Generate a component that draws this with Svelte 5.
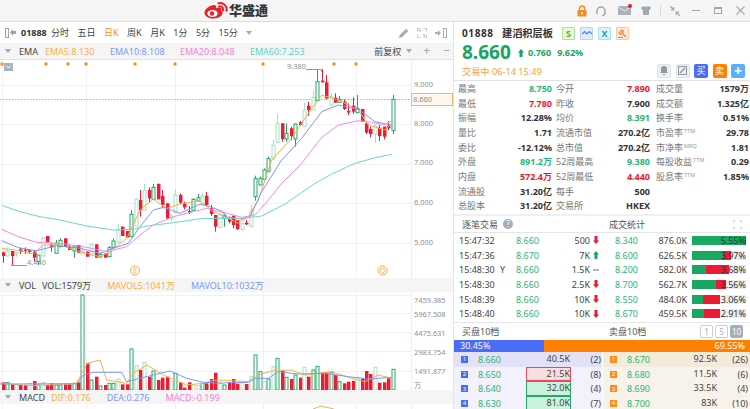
<script>
  const cx = (i) => Math.round(2.7 + i * 4.43) + 0.5;
  const y6 = (v) => 130 + v / 3;
  const y7 = (v) => 60 + v / 3;
  const left = [
    ['r',367,378,365,398],['l',363,378,352,378],['r',363,378,363,405],['l',368,372,365,380],['r',358,364,352,372],
    ['r',358,361,352,372],['r',361,364,361,372],['r',365,383,360,395],['g',375,395,375,405],['l',323,378,323,378],
    ['r',318,337,318,337],['r',344,352,338,365],['g',340,370,330,370],['g',331,350,325,352],['r',325,350,325,350],
    ['r',350,360,345,360],['g',348,363,348,383],['r',345,368,345,368],['l',364,372,352,372],['r',365,380,365,380],
    ['l',343,375,340,375],['r',343,383,343,383],['g',373,380,368,385],['r',370,383,370,383],['g',353,380,348,380],
    ['g',333,352,325,355],['l',300,337,283,337],['r',290,318,290,318],['r',303,322,303,322],['g',253,320,240,320],
    ['l',207,288,205,288],['r',210,240,180,260],['l',182,240,162,240],['r',180,205,172,218],['g',172,208,162,208],
    ['r',162,208,160,208],['r',198,225,180,235],['r',220,265,220,268],['l',258,265,252,275],['l',195,248,178,250],
    ['r',195,218,190,222],['r',220,232,215,238],['r',243,246,228,252],['g',208,241,205,242],['g',203,213,192,215],
    ['l',198,222,188,222],['r',197,225,186,228],['r',235,252,225,258],['r',255,290,255,305],['l',253,292,250,292],
    ['g',256,265,250,290]
  ].map((c) => [c[0], y6(c[1]), y6(c[2]), y6(c[3]), y6(c[4])]);
  const right = [
    ['r',477,485,470,490],['r',468,495,465,505],['r',481,507,481,510],['l',490,508,488,512],['r',488,493,480,495],
    ['l',452,500,435,500],['g',355,410,347,422],['g',355,375,350,375],['g',330,358,325,358],['g',296,335,290,335],
    ['l',256,295,240,300],['l',190,247,162,250],['r',190,237,190,245],['g',220,237,190,245],['r',205,228,200,240],
    ['g',192,237,190,260],['r',186,195,183,198],['l',150,200,128,200],['r',137,150,125,167],['l',112,150,90,150],
    ['g',65,122,30,122],['r',62,67,28,67],['r',67,115,45,118],['l',110,135,98,138],['r',113,128,100,128],
    ['g',118,127,108,127],['r',125,147,118,150],['r',153,155,130,165],['r',137,155,112,162],['g',145,158,105,158],
    ['r',147,185,147,185],['r',190,218,186,222],['r',207,222,200,232],['l',197,222,195,248],['r',203,228,195,243],
    ['r',200,230,200,238],['r',197,205,183,210],['g',118,212,105,222]
  ].map((c) => [c[0], y7(c[1]), y7(c[2]), y7(c[3]), y7(c[4])]);
  const candles = [...left, ...right].map((c, i) => ({ t: c[0], top: c[1], bot: c[2], hi: c[3], lo: c[4], x: cx(i) }));

  const line = (a, b, ya, yb) =>
    [...a.map((p) => `${(p[0] / 3).toFixed(1)},${ya(p[1]).toFixed(1)}`), ...b.map((p) => `${(225 + p[0] / 3).toFixed(1)},${yb(p[1]).toFixed(1)}`)].join(' ');
  const emas = [
    { c: '#f8b04a', p: line([[5,355],[60,362],[100,372],[130,345],[180,345],[240,365],[300,380],[330,365],[380,325],[420,240],[460,208],[500,235],[540,222],[600,212],[640,245],[670,258]], [[0,470],[40,490],[70,470],[100,420],[140,300],[200,235],[250,160],[290,105],[340,120],[400,150],[430,195],[480,210],[500,190]], y6, y7) },
    { c: '#7a98fb', p: line([[5,332],[60,355],[110,362],[170,347],[240,355],[300,370],[340,355],[385,340],[420,290],[460,240],[490,232],[540,250],[600,222],[630,230],[670,245]], [[0,470],[50,478],[75,470],[110,395],[170,300],[230,235],[290,155],[340,135],[400,148],[450,185],[500,195]], y6, y7) },
    { c: '#f98bdc', p: line([[5,298],[60,322],[110,337],[180,340],[260,352],[320,365],[380,350],[420,315],[460,285],[520,260],[580,245],[620,235],[670,248]], [[0,458],[50,472],[90,465],[130,420],[170,370],[230,310],[290,232],[340,195],[400,182],[440,187],[480,195],[500,182]], y6, y7) },
    { c: '#6dd6d1', p: line([[5,226],[60,245],[120,260],[180,270],[260,288],[340,300],[400,298],[440,288],[520,278],[600,266],[670,265]], [[0,475],[50,475],[110,468],[180,432],[270,370],[320,342],[390,310],[450,293],[500,283]], y6, y7) }
  ];
  const dots = [2, 46, 68, 86, 135, 175, 263, 334, 356];
  const vgrid = [2.5, 86.5, 175.5, 263.5, 356.5];
  const axis = [['9.000', 86.7], ['8.000', 125.7], ['7.000', 165], ['6.000', 204.7], ['5.000', 244.5]];

  const yv = (v) => 275 + v / 3;
  const volTops = [
    ['r',322],['g',323],['r',328],['l',330],['r',330],['r',330],['l',325],['r',318],['g',330],['l',322],['r',330],['r',325],['g',330],['g',330],['r',328],['r',328],['g',325],['r',322],
    ['g',60],['r',265],['g',315],['r',305],['g',333],['r',330],['g',325],['g',325],['l',312],['r',328],['r',328],['g',222],['l',272],['r',285],['l',262],['r',305],['g',288],['r',315],['r',308],['r',305],['l',320],['g',295],['r',322],['r',338],['r',322],['l',330],['l',332],['g',325],['r',325],['r',312],['r',293],['l',322],['g',330],
    ['r',322],['r',312],['r',326],['l',322],['r',327],['l',305],['g',240],['g',290],['l',320],['g',312],['l',275],['g',250],['r',285],['g',307],['r',312],['g',300],['r',308],['l',277],['r',305],['g',285],['g',274],['r',293],['r',292],['g',292],['r',300],['g',320],['r',325],['r',320],['r',318],['l',307],['r',310],['r',288],['r',297],['l',277],['r',323],['r',322],['r',310],['g',283]
  ];
  const vols = volTops.map((v, i) => ({ t: v[0], top: yv(v[1]), x: cx(i) }));
  const mavol5 = line([[0,325],[100,332],[230,325],[245,295],[262,265],[300,255],[320,315],[380,325],[400,295],[440,270],[500,305],[560,330],[610,325],[640,316],[670,316]], [[0,316],[70,320],[100,300],[140,288],[200,285],[240,300],[320,290],[380,310],[420,320],[460,300],[500,310]], yv, yv);
  const mavol10 = line([[0,327],[230,326],[250,300],[280,292],[365,292],[380,320],[420,310],[480,295],[510,288],[560,310],[610,322],[670,325]], [[0,323],[70,322],[90,310],[130,310],[160,290],[220,297],[300,295],[370,305],[430,312],[500,307]], yv, yv);
  const volGrid = [295, 313, 332, 351, 371];
  const volAxis = [['7459.385', 303.4], ['5967.508', 316.7], ['4475.631', 335.7], ['2983.754', 355], ['1491.877', 374.4], ['万', 388]];

  const tabs = [['分时'], ['五日'], ['日K', true], ['周K'], ['月K'], ['1分'], ['5分'], ['15分']];
  const stats = [
    ['最高','8.750','g','今开','7.890','r','成交量','1579万',''],
    ['最低','7.780','r','昨收','7.900','','成交额','1.325亿',''],
    ['振幅','12.28%','','均价','8.391','g','换手率','0.51%',''],
    ['量比','1.71','','流通市值','270.2亿','','市盈率','29.78','','TTM'],
    ['委比','-12.12%','','总市值','270.2亿','','市净率','1.81','','MRQ'],
    ['外盘','891.2万','g','52周最高','9.380','g','每股收益','0.29','','TTM'],
    ['内盘','572.4万','r','52周最低','4.440','r','股息率','1.85%','','TTM'],
    ['流通股','31.20亿','','每手','500','','','',''],
    ['总股本','31.20亿','','交易所','HKEX','','','','']
  ];
  const trades = [
    ['15:47:32','','8.660','500','d','8.340','876.0K',53,1.3,'5.55%'],
    ['15:47:36','','8.670','7K','u','8.600','626.5K',31,7.7,'3.97%'],
    ['15:48:30','Y','8.660','1.5K','n','8.200','582.0K',14.3,22.4,'3.68%'],
    ['15:48:30','','8.660','2.5K','d','8.700','562.7K',24.4,10,'3.56%'],
    ['15:48:39','','8.660','10K','d','8.550','484.0K',11,16.7,'3.06%'],
    ['15:48:40','','8.660','10K','d','8.670','459.5K',12,16.4,'2.91%']
  ];
  const buys = [
    [1,'8.660','40.5K','(2)',''],
    [2,'8.650','21.5K','(8)','pink'],
    [3,'8.640','32.0K','(4)','mint'],
    [4,'8.630','81.0K','(7)','mint']
  ];
  const sells = [
    [1,'8.670','92.5K','(26)'],
    [2,'8.680','11.5K','(6)'],
    [3,'8.690','33.5K','(4)'],
    [4,'8.700','83K','(10)']
  ];
</script>

<div class="app">
  <header class="top">
    <div class="logo">
      <svg width="24" height="17" viewBox="0 0 24 17">
        <path d="M0.500 11C0.500 7 6 3 10 3c2 0 2.600 1.400 2 3.200 3-1.200 5.500-.7 5.500 1.500 0 .6-.2 1-.4 1.400 1.200.4 1.500 1.200 1.500 2 0 2.800-4.600 5.400-9 5.400S0.500 14.500 0.500 11z" fill="#e8202c"/>
        <ellipse cx="8.500" cy="11.500" rx="5.200" ry="3.500" fill="#fff"/>
        <circle cx="8" cy="11.500" r="2.200" fill="#e8202c"/>
        <path d="M14.500 1.200c5-1 9 3 8 7.600M15 4.400c2.500-.5 4.500 1.500 4 4" fill="none" stroke="#e8202c" stroke-width="2" stroke-linecap="round"/>
      </svg>
      <span>华盛通</span>
    </div>
    <div class="winicons">
      <svg width="10" height="12" viewBox="0 0 10 12"><path d="M2.500 5V3.500a2.500 2.500 0 0 1 5 0V5" fill="none" stroke="#f58a1f" stroke-width="1.500"/><rect x="0.500" y="5" width="9" height="6.500" rx="1" fill="#f58a1f"/><rect x="4.300" y="7" width="1.400" height="2.500" fill="#fff"/></svg>
      <svg width="12" height="12" viewBox="0 0 12 12"><path d="M2 9V6a4 4 0 0 1 8 0v3M10 9l-2.500 2" fill="none" stroke="#9aa3ad" stroke-width="1.500"/></svg>
      <span class="mail"><svg width="13" height="9" viewBox="0 0 13 9"><rect width="13" height="9" rx="1" fill="#a9b1ba"/><path d="M0.500 1l6 4 6-4" fill="none" stroke="#fff" stroke-width="0.800"/></svg><i></i></span>
      <svg width="10" height="9" viewBox="0 0 10 9"><path d="M3 0L0 1.500 1 4l1-.3V9h6V3.700L9 4l1-2.500L7 0 5 1z" fill="#a0a8b1"/></svg>
      <span class="vsep"></span>
      <svg width="10" height="10" viewBox="0 0 10 10"><path d="M0 0l3.500 3.500M3.800 1v2.800H1M10 10L6.500 6.500M6.200 9V6.200H9" fill="none" stroke="#a0a8b1" stroke-width="1.200"/></svg>
      <span class="minus"></span>
      <span class="maxi"></span>
      <svg width="9" height="9" viewBox="0 0 9 9"><path d="M.5.5l8 8M8.500.5l-8 8" stroke="#a0a8b1" stroke-width="1.100"/></svg>
    </div>
  </header>

  <div class="body">
    <section class="chartcol">
      <div class="toolbar">
        <span class="sidetoggle"><i></i><svg width="6" height="7" viewBox="0 0 6 7"><path d="M0 3.500L3 0v2h3v3H3v2z" fill="#9aa3ad"/></svg></span>
        <b class="code">01888</b>
        <div class="tabs">
          {#each tabs as t}<span class:on={t[1]}>{t[0]}</span>{/each}
          <i class="caret"></i>
        </div>
        <div class="tools">
          <svg width="10" height="10" viewBox="0 0 10 10"><path d="M0 10l.7-3L7 .7 9.300 3 3 9.300z" fill="#a6adb5"/></svg>
          <svg width="10" height="10" viewBox="0 0 10 10"><path d="M0 3.500V0h3.500M6.500 0H10v3.500M10 6.500V10H6.500M3.500 10H0V6.500M2 2l1.500 1.500M8 8L6.500 6.500" fill="none" stroke="#a6adb5" stroke-width="1.200"/></svg>
          <svg width="12" height="10" viewBox="0 0 12 10"><path d="M0 4h3V2l3 3-3 3V6H0z" fill="#a6adb5"/><rect x="8.500" y=".5" width="3" height="9" fill="none" stroke="#a6adb5"/></svg>
        </div>
      </div>

      <div class="legend ema">
        <i class="caret"></i><span class="name">EMA</span>
        <span class="c1 w65">EMA5:8.130</span><span class="c2 w70">EMA10:8.108</span><span class="c3 w70">EMA20:8.048</span><span class="c4">EMA60:7.253</span>
        <div class="adj"><span>前复权</span><i class="caret"></i><em>+</em><em>−</em></div>
      </div>

      <div class="plot price">
        <svg width="453" height="218" viewBox="0 60 453 218">
          {#each [85.5, 124.5, 164.5, 203.5, 243.5] as y}<line x1="0" x2="411" y1={y} y2={y} stroke="#f1f1f1"/>{/each}
          {#each vgrid as x}<line x1={x} x2={x} y1="59" y2="278" stroke="#f1f1f1"/>{/each}
          <line x1="411.5" x2="411.5" y1="59" y2="278" stroke="#eeeeee"/>
          <line x1="0" x2="411" y1="99.5" y2="99.5" stroke="#f6a33c" stroke-dasharray="1.5 1.5"/>
          {#each dots as x}<circle cx={x} cy="64" r="1.7" fill="#ff8a1f"/>{/each}
          {#each candles as c}
            <line x1={c.x} x2={c.x} y1={c.hi} y2={c.lo} stroke={c.t === 'r' ? '#ec1c34' : c.t === 'g' ? '#22a968' : '#a8e0c3'}/>
            {#if c.t === 'r'}
              <rect x={c.x - 1.5} y={c.top} width="3.5" height={Math.max(c.bot - c.top, 1.5)} fill="#ec1c34"/>
            {:else}
              <rect x={c.x - 1.5} y={c.top} width="3" height={c.bot - c.top} fill="#fff" stroke={c.t === 'g' ? '#22a968' : '#a8e0c3'}/>
            {/if}
          {/each}
          {#each emas as m}<polyline points={m.p} fill="none" stroke={m.c}/>{/each}
          <polyline points="306,69.5 321.5,69.5 321.5,72" fill="none" stroke="#999"/>
          <text x="287" y="69" class="tiny">9.380</text>
          <line x1="11" x2="27" y1="265.5" y2="265.5" stroke="#999"/>
          <text x="27" y="265" class="tiny">4.440</text>
          {#each axis as a}<text x="414" y={a[1]} class="ax">{a[0]}</text>{/each}
          <rect x="411.5" y="93.5" width="41" height="12" fill="#fff6ec" stroke="#f8b565"/>
          <text x="413" y="102.2" class="ax">8.660</text>
          <circle cx="135" cy="270.5" r="4.5" fill="#fff" stroke="#f9a650"/>
          <text x="135" y="273" class="mark">E</text>
          <circle cx="382.5" cy="270.5" r="4.5" fill="#fff" stroke="#f9a650"/>
          <text x="382.5" y="273" class="mark">Q</text>
          <rect x="4" y="63" width="9" height="8" fill="#aab2bd"/>
          <path d="M6 65.5l2.5 2.500 2.500-2.500" fill="none" stroke="#fff"/>
        </svg>
      </div>

      <div class="legend vol">
        <i class="caret"></i><span class="name">VOL</span><span class="dark gap">VOL:1579万</span><span class="c1 gap2">MAVOL5:1041万</span><span class="c2 gap2">MAVOL10:1032万</span>
      </div>

      <div class="plot volume">
        <svg width="453" height="98" viewBox="0 292 453 98">
          {#each volGrid as y}<line x1="0" x2="411" y1={y + .5} y2={y + .5} stroke="#f1f1f1"/>{/each}
          {#each vgrid as x}<line x1={x} x2={x} y1="292" y2="390" stroke="#f1f1f1"/>{/each}
          <line x1="411.5" x2="411.5" y1="292" y2="390" stroke="#eeeeee"/>
          {#each vols as v}
            {#if v.t === 'r'}
              <rect x={v.x - 1.5} y={v.top} width="3.5" height={390 - v.top} fill="#ec1c34"/>
            {:else}
              <rect x={v.x - 1.5} y={v.top} width="3" height={390 - v.top} fill="#fff" stroke={v.t === 'g' ? '#22a968' : '#a8e0c3'}/>
            {/if}
          {/each}
          <polyline points={mavol5} fill="none" stroke="#f8b04a"/>
          <polyline points={mavol10} fill="none" stroke="#7a98fb"/>
          {#each volAxis as a}<text x="414" y={a[1]} class="ax">{a[0]}</text>{/each}
        </svg>
      </div>

      <div class="legend macd">
        <i class="caret"></i><span class="name">MACD</span><span class="c1 gap">DIF:0.176</span><span class="c2 gap2">DEA:0.276</span><span class="c3 gap2">MACD:-0.199</span>
      </div>
      <div class="plot rest">
        <svg width="453" height="5" viewBox="0 404 453 5">
          {#each vgrid as x}<line x1={x} x2={x} y1="404" y2="409" stroke="#f1f1f1"/>{/each}
          <line x1="411.5" x2="411.5" y1="404" y2="409" stroke="#eeeeee"/>
          <polyline points="313,409 321,406 334,409" fill="none" stroke="#f8b04a"/>
        </svg>
      </div>
    </section>

    <aside class="side">
      <div class="quote">
        <div class="q1">
          <b class="qcode">01888</b><b class="qname">建滔积层板</b>
          <div class="badges">
            <span class="bd s">S</span>
            <span class="bd w"><svg width="10" height="6" viewBox="0 0 10 6"><path d="M0 4l2.500-2.500L5 4l2.500-2.500L10 4" fill="none" stroke="#3f86d8" stroke-width="1.200"/></svg></span>
            <span class="bd x">X</span>
            <span class="bd h"><svg width="9" height="9" viewBox="0 0 9 9"><path d="M1 4l3-3 1.500 1.500-3 3zM0 8.500h5M4 4l4 4" fill="none" stroke="#f2813a" stroke-width="1.200"/></svg></span>
          </div>
        </div>
        <div class="q2">
          <b class="big">8.660</b>
          <svg class="up" width="6" height="8" viewBox="0 0 6 8"><path d="M3 0l3 3.500H4.500V8h-3V3.500H0z" fill="#17a660"/></svg>
          <b class="chg">0.760</b><b class="chg pct">9.62%</b>
        </div>
        <div class="q3">
          <span class="trading">交易中 06-14 15:49</span>
          <div class="btns">
            <span class="btn gray"><svg width="8" height="9" viewBox="0 0 8 9"><path d="M4 0a3 3 0 0 1 3 3v3l1 1H0l1-1V3a3 3 0 0 1 3-3zM3 8h2v1H3z" fill="#8f98a3"/></svg></span>
            <span class="btn gray"><svg width="9" height="9" viewBox="0 0 9 9"><rect x=".5" y=".5" width="8" height="8" fill="none" stroke="#8f98a3"/><path d="M2 7l5-5" stroke="#8f98a3" stroke-width="1.500"/></svg></span>
            <span class="btn blue">买</span>
            <span class="btn orange">卖</span>
            <span class="btn sky">+</span>
          </div>
        </div>
      </div>

      <div class="stats">
        {#each stats as r}
          <div class="srow">
            <span class="lb">{r[0]}</span><span class="val {r[2]}">{r[1]}</span>
            <span class="lb">{r[3]}</span><span class="val {r[5]}">{r[4]}</span>
            <span class="lb">{r[6]}{#if r[9]}<sup>{r[9]}</sup>{/if}</span><span class="val {r[8]}">{r[7]}</span>
          </div>
        {/each}
      </div>

      <div class="sechead heads">
        <div class="hl"><span>逐笔交易</span><i class="q">?</i></div>
        <div class="hr"><span>成交统计</span>
          <svg width="9" height="9" viewBox="0 0 9 9"><path d="M0 3V0h3M6 0h3v3M9 6v3H6M3 9H0V6" fill="none" stroke="#b9bfc6"/></svg>
        </div>
      </div>
      <div class="trades">
        {#each trades as t}
          <div class="trow">
            <span class="tm">{t[0]}</span><span class="fl">{t[1]}</span><span class="pg">{t[2]}</span><span class="vr">{t[3]}</span>
            <span class="ar">
              {#if t[4] === 'd'}<svg width="6" height="8" viewBox="0 0 6 8"><path d="M3 8L0 4.500h1.500V0h3v4.500H6z" fill="#ec1c34"/></svg>
              {:else if t[4] === 'u'}<svg width="6" height="8" viewBox="0 0 6 8"><path d="M3 0l3 3.500H4.500V8h-3V3.500H0z" fill="#17a660"/></svg>
              {:else}<svg width="6" height="8" viewBox="0 0 6 8"><rect y="3" width="6" height="2" fill="#b5b5b5"/></svg>{/if}
            </span>
            <span class="pc">{t[5]}</span><span class="v2">{t[6]}</span>
            <span class="bar"><i class="bg" style="width:{t[7]}px"></i><i class="br" style="width:{t[8]}px"></i><em>{t[9]}</em></span>
          </div>
        {/each}
      </div>

      <div class="sechead book">
        <div class="hl"><span>买盘10档</span></div>
        <div class="hr"><span>卖盘10档</span>
          <div class="lv"><i>1</i><i>5</i><i class="act">10</i></div>
        </div>
      </div>
      <div class="ratio"><span class="rb">30.45%</span><span class="ro">69.55%</span></div>
      <div class="bookrows">
        <div class="bc buy">
          {#each buys as b, i}
            <div class="brow" class:first={i === 0}>
              <i class="no">{b[0]}</i><span class="pg">{b[1]}</span><span class="sz {b[4]}">{b[2]}</span><span class="ct">{b[3]}</span>
            </div>
          {/each}
        </div>
        <div class="bc sell">
          {#each sells as b, i}
            <div class="brow" class:first={i === 0}>
              <i class="no">{b[0]}</i><span class="pg">{b[1]}</span><span class="sz">{b[2]}</span><span class="ct">{b[3]}</span>
            </div>
          {/each}
        </div>
      </div>
    </aside>
  </div>
</div>

<style>
  :global(body) { margin: 0; background: #fff; }
  .app {
    width: 750px; height: 409px; overflow: hidden; display: flex; flex-direction: column;
    font-family: "Noto Sans", "Noto Sans CJK SC", sans-serif; font-size: 9px; color: #333; line-height: 1;
  }
  i, em { font-style: normal; }
  .top { height: 21px; flex: none; background: #f5f5f5; border-bottom: 1px solid #dedede; position: relative; display: flex; align-items: center; justify-content: flex-end; }
  .logo { position: absolute; left: 204px; top: 2px; display: flex; align-items: center; gap: 1px; }
  .logo span { font-size: 13px; font-weight: 900; color: #333; }
  .winicons { display: flex; align-items: center; padding-right: 5px; }
  .winicons > :nth-child(2) { margin-left: 8px; }
  .winicons > :nth-child(3) { margin-left: 11px; }
  .winicons > :nth-child(4) { margin-left: 10px; }
  .winicons > :nth-child(5) { margin-left: 9px; }
  .winicons > :nth-child(6) { margin-left: 9px; }
  .winicons > :nth-child(7) { margin-left: 12px; }
  .winicons > :nth-child(8) { margin-left: 14px; }
  .winicons > :nth-child(9) { margin-left: 14px; }
  .mail { position: relative; display: flex; }
  .mail i { position: absolute; right: -1px; top: -2px; width: 4px; height: 4px; border-radius: 50%; background: #f0142d; }
  .vsep { width: 1px; height: 11px; background: #d8d8d8; }
  .minus { width: 8px; height: 1px; background: #a0a8b1; }
  .maxi { width: 6px; height: 4px; border: 1px solid #a0a8b1; border-top-width: 2px; }
  .body { flex: 1; display: flex; min-height: 0; }
  .chartcol { width: 453px; flex: none; border-right: 1px solid #e4e4e4; display: flex; flex-direction: column; }
  .toolbar { height: 21px; flex: none; display: flex; align-items: center; position: relative; }
  .sidetoggle { display: flex; align-items: center; gap: 1px; margin-left: 5px; width: 16px; }
  .sidetoggle i { width: 2px; height: 8px; border: 1px solid #9aa3ad; }
  .code { color: #333; width: 30px; }
  .tabs { display: flex; align-items: center; gap: 8.5px; color: #444; }
  .tabs .on { color: #ff8a1f; }
  .tools { margin-left: auto; display: flex; align-items: center; gap: 8px; padding-right: 6px; }
  .caret { display: inline-block; width: 0; height: 0; border-left: 3px solid transparent; border-right: 3px solid transparent; border-top: 4px solid #a3aab3; }
  .legend { flex: none; height: 14px; background: #f5f5f5; display: flex; align-items: center; padding-left: 5px; position: relative; box-sizing: border-box; }
  .legend .name { margin-left: 8px; color: #444; }
  .legend.ema { height: 17px; border-bottom: 1px solid #e2e2e2; }
  .c1 { color: #f8b04a; } .c2 { color: #7a98fb; } .c3 { color: #f77fd6; } .c4 { color: #5fd0cb; }
  .dark { color: #444; }
  .gap { margin-left: 6px; } .gap2 { margin-left: 16px; }
  .ema .c1 { margin-left: 7px; } .w65 { width: 65px; } .w70 { width: 70px; }
  .adj { position: absolute; right: 3px; top: 0; height: 100%; display: flex; align-items: center; gap: 5px; color: #444; }
  .adj em { color: #a3aab3; font-size: 12px; margin-left: 6px; }
  .adj em:last-child { margin-left: 8px; }
  .plot { flex: none; overflow: hidden; }
  .plot svg { display: block; }
  .tiny, .ax { font-size: 7.4px; fill: #8f8f8f; font-family: "Noto Sans", "Noto Sans CJK SC", sans-serif; }
  .mark { font-size: 7px; fill: #f9a650; text-anchor: middle; font-family: "Noto Sans", sans-serif; }

  .side { flex: 1; min-width: 0; display: flex; flex-direction: column; }
  .quote { height: 59px; flex: none; box-sizing: border-box; padding: 5px 5px 0 8px; border-bottom: 1px solid #e2e2e2; }
  .q1 { display: flex; align-items: center; height: 12px; }
  .qcode { font-size: 10px; letter-spacing: .6px; color: #333; width: 40px; }
  .qname { font-size: 10.2px; color: #333; width: 60px; }
  .badges { display: flex; gap: 5px; }
  .bd { width: 11px; height: 11px; border-radius: 1px; display: flex; align-items: center; justify-content: center; font-size: 9px; font-weight: 700; }
  .bd.s { background: #e8f6da; color: #5fae2e; border: 1px solid #b8dd96; }
  .bd.w { background: #e0eefc; border: 1px solid #b8d4f4; }
  .bd.x { background: #dcf3fa; color: #1f9cc4; border: 1px solid #a8e0ee; }
  .bd.h { background: #feeadd; border: 1px solid #fbc7a6; }
  .q2 { display: flex; align-items: center; height: 23px; margin-top: 2px; }
  .big { font-size: 19px; color: #17a660; width: 56px; }
  .up { margin-right: 4px; }
  .chg { color: #17a660; }
  .pct { margin-left: 6px; }
  .q3 { display: flex; align-items: center; justify-content: space-between; height: 14px; margin-top: 1px; }
  .trading { color: #f8a044; font-size: 9.2px; }
  .btns { display: flex; gap: 4.5px; margin-top: -3px; }
  .btn { width: 14px; height: 14px; border-radius: 2px; display: flex; align-items: center; justify-content: center; color: #fff; font-size: 9px; box-sizing: border-box; }
  .gray { background: #eef0f3; border: 1px solid #dfe2e6; }
  .blue { background: #4a6cf7; } .orange { background: #ff8000; } .sky { background: #5cb0fb; font-size: 14px; font-weight: 700; }

  .stats { height: 133px; flex: none; border-bottom: 2px solid #f0f0f0; }
  .srow { height: 14.7px; display: grid; grid-template-columns: 40px 54px 40px 58px 50px 49px; align-items: center; padding-left: 4px; }
  .lb { color: #777; white-space: nowrap; }
  .srow .lb:nth-child(3) { padding-left: 4px; }
  .srow .lb:nth-child(5) { padding-left: 6px; }
  sup { font-size: 5.5px; color: #999; vertical-align: 3px; line-height: 0; margin-left: 1px; }
  .val { text-align: right; font-weight: 700; color: #333; white-space: nowrap; }
  .val.g { color: #2bb673; } .val.r { color: #f0142d; }

  .sechead { flex: none; display: grid; grid-template-columns: 148px 1fr; align-items: center; color: #555; }
  .hl { padding-left: 8px; display: flex; align-items: center; gap: 5px; }
  .hr { padding-left: 7px; display: flex; align-items: center; justify-content: space-between; padding-right: 7px; height: 100%; }
  .heads { height: 16px; border-bottom: 1px solid #e6e6e6; }
  .heads .hr { padding-right: 8px; }
  .q { width: 10px; height: 10px; border-radius: 50%; background: #a6adba; color: #fff; font-size: 8px; display: flex; align-items: center; justify-content: center; }
  .trades { height: 88px; flex: none; padding-bottom: 1px; border-bottom: 1px solid #e6e6e6; }
  .trow { height: 14.7px; display: grid; grid-template-columns: 41px 16px 44px 30px 10px 50px 37px 59px; align-items: center; padding-left: 5px; white-space: nowrap; color: #444; }
  .pg { color: #2bb673; }
  .vr { text-align: right; }
  .ar { display: flex; justify-content: center; }
  .ar svg { margin-left: 1px; }
  .pc { color: #2bb673; padding-left: 15px; }
  .v2 { text-align: right; }
  .bar { position: relative; height: 9px; width: 54px; margin-left: 5px; display: flex; background: #eee; }
  .bar i { display: block; height: 100%; }
  .bg { background: #1aa860; } .br { background: #ec1c34; }
  .bar em { position: absolute; right: 0; top: 0; line-height: 9px; color: #333; }
  .book { height: 17px; }
  .lv { display: flex; gap: 2px; }
  .lv i { width: 13px; height: 13px; box-sizing: border-box; border: 1px solid #c9ced4; border-radius: 2px; color: #a6adb5; font-size: 8px; display: flex; align-items: center; justify-content: center; }
  .lv .act { background: #a6aeb8; color: #fff; border-color: #a6aeb8; }
  .ratio { height: 12px; flex: none; display: flex; color: #fff; align-items: stretch; line-height: 12px; }
  .rb { width: 90px; background: #4a6cf7; padding-left: 6px; box-sizing: border-box; }
  .ro { flex: 1; background: #ff8000; text-align: right; padding-right: 5px; }
  .bookrows { flex: 1; display: grid; grid-template-columns: 148px 1fr; min-height: 0; }
  .bc { background: #f3f1fb; }
  .sell { background: #f7f3eb; border-left: 1px solid #fff; }
  .brow { height: 14.7px; display: grid; grid-template-columns: 17px 48px 45px 31px; align-items: center; color: #444; padding-left: 7px; }
  .sell .brow { grid-template-columns: 17px 48px 43px 31px; }
  .buy .brow.first { background: #e3e1f8; }
  .sell .brow.first { background: #f3ecdc; }
  .no { width: 7px; height: 7px; display: flex; align-items: center; justify-content: center; color: #fff; font-size: 6px; background: #4a6cf7; }
  .sell .no { background: #ff8a1f; }
  .sz { text-align: right; height: 14.7px; line-height: 14.7px; box-sizing: border-box; padding-right: 1px; }
  .sz.pink { background: #fadedf; outline: 1px solid #ec4a5c; outline-offset: -1px; }
  .sz.mint { background: #c9f3dc; outline: 1px solid #26a868; outline-offset: -1px; }
  .ct { text-align: right; padding-right: 1px; }
</style>
